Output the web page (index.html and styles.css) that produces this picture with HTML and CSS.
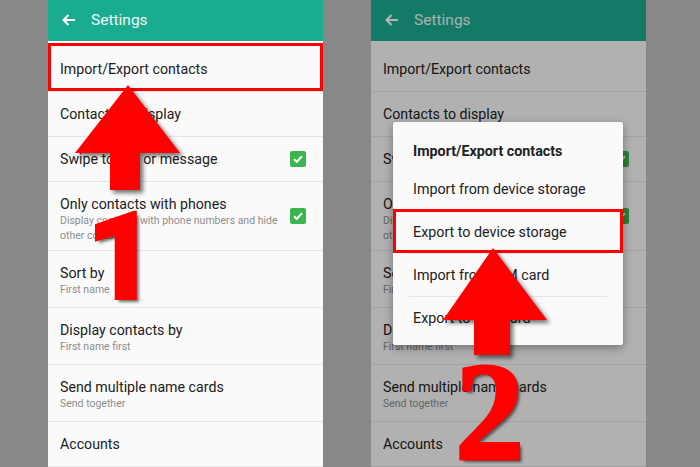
FILE: index.html
```html
<!DOCTYPE html>
<html>
<head>
<meta charset="utf-8">
<link rel="stylesheet" href="styles.css">
</head>
<body>
<div class="stage">
  <div class="phone">
    <div class="header">
      <svg class="back" width="14" height="12" viewBox="0 0 14 12"><path d="M1.5 6 H13 M6.5 1 L1.5 6 L6.5 11" fill="none" stroke="#fff" stroke-width="2"/></svg>
      <span class="htitle">Settings</span>
    </div>
    <div class="list">
      <div class="row first"><div class="t">Import/Export contacts</div></div>
      <div class="row"><div class="t">Contacts to display</div></div>
      <div class="row chk"><div class="t">Swipe to call or message</div><span class="cb"><svg width="16" height="16" viewBox="0 0 16 16"><path d="M4 8.2 L6.8 10.8 L12 5.2" fill="none" stroke="#fff" stroke-width="2"/></svg></span></div>
      <div class="row three chk"><div class="tx"><div class="t">Only contacts with phones</div><div class="s">Display contacts with phone numbers and hide other contacts</div></div><span class="cb"><svg width="16" height="16" viewBox="0 0 16 16"><path d="M4 8.2 L6.8 10.8 L12 5.2" fill="none" stroke="#fff" stroke-width="2"/></svg></span></div>
      <div class="row two"><div class="t">Sort by</div><div class="s">First name</div></div>
      <div class="row two"><div class="t">Display contacts by</div><div class="s">First name first</div></div>
      <div class="row two"><div class="t">Send multiple name cards</div><div class="s">Send together</div></div>
      <div class="row"><div class="t">Accounts</div></div>
    </div>
  </div>
  <div class="phone dim">
    <div class="header">
      <svg class="back" width="14" height="12" viewBox="0 0 14 12"><path d="M1.5 6 H13 M6.5 1 L1.5 6 L6.5 11" fill="none" stroke="#fff" stroke-width="2"/></svg>
      <span class="htitle">Settings</span>
    </div>
    <div class="list">
      <div class="row first"><div class="t">Import/Export contacts</div></div>
      <div class="row"><div class="t">Contacts to display</div></div>
      <div class="row chk"><div class="t">Swipe to call or message</div><span class="cb"><svg width="16" height="16" viewBox="0 0 16 16"><path d="M4 8.2 L6.8 10.8 L12 5.2" fill="none" stroke="#fff" stroke-width="2"/></svg></span></div>
      <div class="row three chk"><div class="tx"><div class="t">Only contacts with phones</div><div class="s">Display contacts with phone numbers and hide other contacts</div></div><span class="cb"><svg width="16" height="16" viewBox="0 0 16 16"><path d="M4 8.2 L6.8 10.8 L12 5.2" fill="none" stroke="#fff" stroke-width="2"/></svg></span></div>
      <div class="row two"><div class="t">Sort by</div><div class="s">First name</div></div>
      <div class="row two"><div class="t">Display contacts by</div><div class="s">First name first</div></div>
      <div class="row two"><div class="t">Send multiple name cards</div><div class="s">Send together</div></div>
      <div class="row"><div class="t">Accounts</div></div>
    </div>
    <div class="scrim"></div>
    <div class="dialog">
      <div class="dtitle">Import/Export contacts</div>
      <div class="ditem">Import from device storage</div>
      <div class="ditem">Export to device storage</div>
      <div class="ditem">Import from SIM card</div>
      <div class="ditem">Export to SIM card</div>
    </div>
  </div>

  <div class="hl hl1"></div>
  <div class="hl hl2"></div>
  <svg class="arrows" width="700" height="467" viewBox="0 0 700 467">
    <polygon points="128,85 180,153 140,153 140,190 110,190 110,153 75,153" fill="#fe0000"/>
    <polygon points="493,248 547,320 510,320 510,355 474,355 474,320 443,320" fill="#fe0000"/>
  </svg>
  <div class="num n1">1</div>
  <div class="num n2">2</div>
</div>
</body>
</html>
```
FILE: styles.css
```css
html, body {
  margin: 0;
  padding: 0;
}
body {
  background: #888888;
  font-family: Roboto, "Noto Sans", sans-serif;
}
.stage {
  position: relative;
  width: 700px;
  height: 467px;
  overflow: hidden;
  display: flex;
  gap: 48px;
  padding-left: 48px;
  box-sizing: border-box;
}
.phone {
  position: relative;
  width: 275px;
  height: 467px;
  background: #fafafa;
  overflow: hidden;
  flex: none;
}
.header {
  height: 41px;
  background: #1aac90;
  display: flex;
  align-items: center;
  padding: 0 0 2px 14px;
  box-sizing: border-box;
  color: #eef8f6;
}
.back {
  flex: none;
  margin-right: 15px;
}
.htitle {
  font-size: 15.5px;
}
.row {
  height: 45px;
  box-sizing: border-box;
  padding: 14px 17px 0 12px;
  border-bottom: 1px solid #e4e4e4;
  color: #212121;
}
.row.first { height: 51px; padding-top: 20px; }
.row.two { height: 57px; }
.row.three { height: 69px; }
.row.chk {
  display: flex;
  align-items: flex-start;
  justify-content: space-between;
}
.t {
  font-size: 14.2px;
  line-height: 17px;
  white-space: nowrap;
}
.s {
  font-size: 10.5px;
  line-height: 15px;
  color: #8e8e8e;
}
.tx { width: 228px; }
.cb {
  flex: none;
  width: 16px;
  height: 16px;
  border-radius: 2px;
  background: #3db54e;
  align-self: center;
  margin-top: -14px;
}
.cb svg { display: block; }
.scrim {
  position: absolute;
  inset: 0;
  background: rgba(0, 0, 0, 0.29);
}
.dialog {
  position: absolute;
  left: 22px;
  top: 122px;
  width: 230px;
  height: 223px;
  background: #fafafa;
  border-radius: 2px;
  box-shadow: 0 3px 10px rgba(0, 0, 0, 0.35);
  color: #212121;
}
.dtitle {
  height: 45px;
  box-sizing: border-box;
  padding: 21px 0 0 20px;
  font-size: 14.3px;
  font-weight: 700;
  line-height: 17px;
}
.ditem {
  height: 43px;
  box-sizing: border-box;
  margin: 0 16px;
  padding: 13px 0 0 4px;
  font-size: 14.3px;
  line-height: 17px;
  border-top: 1px solid #e6e6e6;
}
.dtitle + .ditem { border-top-color: transparent; }
.hl {
  position: absolute;
  border: 3px solid #fe0000;
  box-sizing: border-box;
}
.hl1 { left: 48px; top: 43px; width: 275px; height: 48px; }
.hl2 { left: 393px; top: 209px; width: 230px; height: 44px; }
.arrows {
  position: absolute;
  left: 0;
  top: 0;
  filter: drop-shadow(3px 3px 2px rgba(0, 0, 0, 0.55));
}
.num {
  position: absolute;
  color: #fe0000;
  line-height: 1;
  text-shadow: 3px 3px 3px rgba(0, 0, 0, 0.55);
}
.n1 {
  left: 86px;
  top: 197px;
  font-family: Roboto, "Liberation Sans", sans-serif;
  font-weight: 900;
  font-size: 122px;
  -webkit-text-stroke: 2px #fe0000;
}
.n2 {
  left: 455px;
  top: 343px;
  font-family: "Liberation Serif", "Times New Roman", serif;
  font-weight: 700;
  font-size: 139px;
  -webkit-text-stroke: 3px #fe0000;
}
```
